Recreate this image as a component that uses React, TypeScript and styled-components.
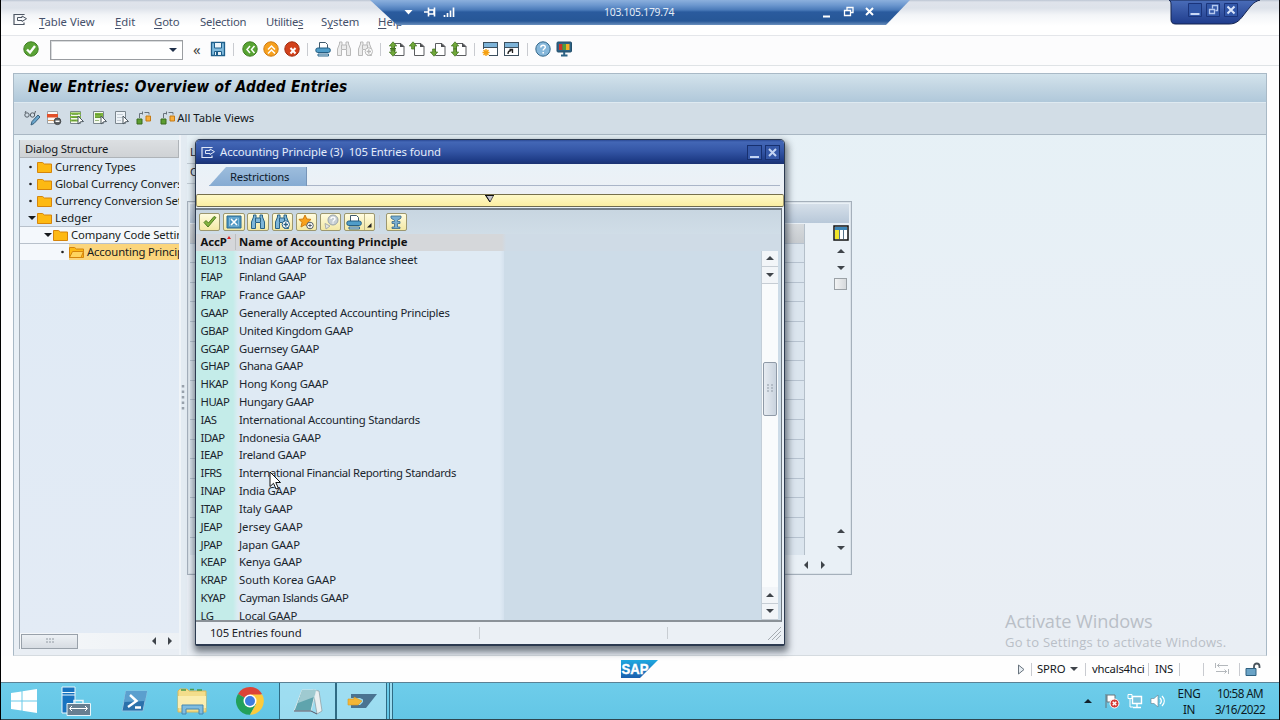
import React from 'react';
import styled, { createGlobalStyle } from 'styled-components';

const Global = createGlobalStyle`
  * { box-sizing: border-box; }
  body { margin: 0; overflow: hidden; background: #fff; }
`;

const ui = '"Noto Sans", "DejaVu Sans Condensed", sans-serif';

const Screen = styled.div`
  position: relative;
  width: 1280px;
  height: 720px;
  display: flex;
  flex-direction: column;
  overflow: hidden;
  background: #fdfdfe;
  border-left: 1px solid #000;
  border-right: 1px solid #0c0c10;
  font-family: ${ui};
  font-size: 11.3px;
  line-height: 16px;
  color: #1c2227;
  white-space: pre;
`;

/* ---------- menu and system toolbar ---------- */
const MenuBar = styled.div`
  height: 36px;
  flex: none;
  display: flex;
  align-items: flex-start;
  padding: 14px 0 0 12px;
  border-bottom: 1px solid #e4e6ea;
  background: linear-gradient(#bcc5d3 0, #dfe3eb 2px, #dde2ea 8px, #f3f5f8 15px, #fff 26px);
`;
const MenuItem = styled.span<{ $w: number; $ls?: number }>`
  width: ${p => p.$w}px;
  flex: none;
  color: #45506a;
  letter-spacing: ${p => p.$ls ?? 0}px;
  u { text-underline-offset: 2px; text-decoration-thickness: 1px; }
`;
const MenuIcon = styled.span`
  width: 26px;
  flex: none;
  height: 14px;
  margin-top: -1px;
  svg { display: block; }
`;
const SysBar = styled.div`
  height: 30px;
  flex: none;
  display: flex;
  align-items: center;
  padding: 0 0 3px 22px;
  border-bottom: 1px solid #dfe3e6;
  background: #fcfcfd;
`;
const Command = styled.div`
  width: 133px;
  height: 20px;
  flex: none;
  margin: 2px 0 0 11px;
  border: 1px solid #9a9da1;
  box-shadow: inset 1px 1px 0 #d9dbdd;
  background: #fff;
  display: flex;
  align-items: center;
  justify-content: flex-end;
  padding-right: 5px;
`;
const Back2 = styled.span`
  width: 17px;
  flex: none;
  margin-left: 10px;
  font-size: 15px;
  color: #444;
`;
const Slot = styled.span<{ $gap?: number }>`
  width: 16px;
  height: 16px;
  flex: none;
  margin-left: ${p => p.$gap ?? 4.9}px;
  svg { display: block; }
`;
const Sep = styled.i<{ $l?: number }>`
  width: 1px;
  height: 13px;
  flex: none;
  background: #c9cbd0;
  margin-left: ${p => p.$l ?? 7}px;
`;

/* ---------- workspace ---------- */
const Work = styled.div`
  height: 583px;
  flex: none;
  margin: 7px 12px 0 12px;
  border: 1px solid #a9b9c6;
  border-bottom-color: #d5dbe0;
  display: flex;
  flex-direction: column;
  background: linear-gradient(#e6f1f6, #e9eff6 60%, #e9eef4);
`;
const TitleBand = styled.div`
  height: 28px;
  flex: none;
  padding: 3px 0 0 14px;
  background: linear-gradient(#d3e3ec, #c3d6e3 45%, #b0c8da);
  font: italic bold 15.3px/20px "DejaVu Sans Condensed", "DejaVu Sans", sans-serif;
  letter-spacing: 0.26px;
  color: #000;
`;
const AppBar = styled.div`
  height: 33px;
  flex: none;
  display: flex;
  align-items: center;
  padding: 0 0 2px 5px;
  background: #d2dde6;
  border-bottom: 1px solid #a9b7c3;
  border-top: 1px solid #dfeaf1;
  color: #14181c;
`;
const Body = styled.div`
  flex: 1;
  display: flex;
  min-height: 0;
`;
const TreePane = styled.div`
  width: 160px;
  flex: none;
  margin: 5px 0 0 5px;
  border-left: 1px solid #a3adb7;
  height: 509px;
  display: flex;
  flex-direction: column;
  overflow: hidden;
  background: linear-gradient(#dfeaf5, #e3ebf5);
`;
const TreeHead = styled.div`
  height: 18px;
  padding: 1px 0 0 5px;
  flex: none;
  border: solid #aeb3b8;
  border-width: 0 1px 1px 0;
  background: linear-gradient(#dcdfe2, #cfd2d5);
  color: #14181c;
  letter-spacing: -0.2px;
`;
const TreeRow = styled.div<{ $in: number; $lit?: boolean }>`
  height: 17px;
  flex: none;
  display: flex;
  align-items: center;
  padding-left: ${p => p.$in}px;
  border-top: 1px solid ${p => (p.$lit ? '#b8c1cb' : 'transparent')};
  background: ${p => (p.$lit ? '#f4f8fc' : 'transparent')};
  color: #181c20;
`;
const Mark = styled.span`
  width: 9px;
  flex: none;
  display: flex;
  align-items: center;
  height: 12px;
`;
const TreeLabel = styled.span<{ $sel?: boolean; $ls?: number }>`
  display: flex;
  gap: 3px;
  align-items: center;
  flex: 1 0 auto;
  height: 16px;
  letter-spacing: ${p => p.$ls ?? 0}px;
  background: ${p => (p.$sel ? '#fbd57c' : 'transparent')};
`;
const Filler = styled.div`flex: 1;`;
const TreeScroll = styled.div`
  height: 16px;
  flex: none;
  display: flex;
  align-items: center;
  gap: 8px;
  padding-right: 5px;
  background: linear-gradient(90deg, #f6f8fa, #edf1f5);
`;
const HThumb = styled.div`
  width: 57px;
  height: 15px;
  margin-right: auto;
  margin-left: 1px;
  border: 1px solid #99a1aa;
  background: linear-gradient(#edf1f5, #d7dce2);
  display: grid;
  place-items: center;
`;
const Splitter = styled.div`
  width: 8px;
  flex: none;
  display: grid;
  place-items: center;
  background: linear-gradient(90deg, #f0f4f8 2px, #e3ebf2 2px);
  padding: 5px 1px 0 0;
`;
const Detail = styled.div`
  width: 665px;
  flex: none;
  margin-top: 9px;
  display: flex;
  flex-direction: column;
`;
const Field = styled.div`
  height: 20px;
  padding-left: 3px;
  border-bottom: 1px solid #c2ccd4;
  width: 50px;
`;
const TableBox = styled.div`
  margin-top: 17px;
  height: 374px;
  border: 1px solid #a5b0bb;
  box-shadow: inset 0 0 0 1px #dbe3ea;
  display: flex;
  flex-direction: column;
  background: #e9f0f6;
  padding: 2px;
`;
const TableTitle = styled.div`
  height: 19px;
  flex: none;
  background: linear-gradient(#d5dfe9, #b8c8d9);
`;
const TableMain = styled.div`
  flex: 1;
  display: flex;
  justify-content: space-between;
`;
const Grid = styled.div`
  width: 615px;
  height: 331px;
  margin-top: 1px;
  border-right: 1px solid #b4bfc9;
  background: repeating-linear-gradient(#dbe5ee 0 18.6px, #b6c2cf 18.6px 19.6px);
`;
const GridHead = styled.div`
  height: 19px;
  background: linear-gradient(#d6dadd, #c7cbcf);
`;
const VBar = styled.div`
  width: 17px;
  display: flex;
  flex-direction: column;
  align-items: center;
  padding: 2px 0 3px;
  gap: 9px;
  svg { display: block; flex: none; }
  svg:first-child { margin-bottom: -3px; }
`;
const VThumb = styled.div`
  width: 13px;
  height: 12px;
  border: 1px solid #9ba1a6;
  background: linear-gradient(90deg, #f2f3f4, #d6d9dc);
  margin-top: -3px;
`;
const TableFoot = styled.div`
  height: 20px;
  flex: none;
  display: flex;
  align-items: center;
  gap: 9px;
  padding-left: 612px;
`;

/* ---------- dialog ---------- */
const Dialog = styled.div`
  position: absolute;
  left: 194px;
  top: 139px;
  width: 590px;
  height: 507px;
  border: solid #2c3a50;
  border-width: 1px 1px 2px;
  border-radius: 5px 5px 2px 2px;
  background: #e9f0f6;
  box-shadow: 1px 4px 7px 2px rgba(40, 50, 62, 0.62);
  display: flex;
  flex-direction: column;
  overflow: hidden;
`;
const DlgTitle = styled.div`
  height: 24px;
  flex: none;
  display: flex;
  align-items: center;
  padding: 0 4px 0 5px;
  color: #e4ecfa;
  background: linear-gradient(#2c4a96 0, #4367b6 2px, #3456a6 11px, #1f3d88 20px, #1a3271);
  span { margin: 0 auto 0 4px; letter-spacing: -0.08px; }
`;
const DlgBtn = styled.i`
  width: 15px;
  height: 15px;
  margin-left: 3px;
  border: 1px solid #17306f;
  background: #3558a8;
  svg { display: block; }
`;
const Tabs = styled.div`
  height: 30px;
  flex: none;
  padding: 3px 4px 0 13px;
  background: linear-gradient(#e9f2f8, #edf0f5);
`;
const TabLine = styled.div`
  height: 19px;
  border-bottom: 1px solid #aab5c8;
`;
const Tab = styled.div`
  width: 98px;
  height: 19px;
  padding: 2px 0 0 21px;
  color: #101c2c;
  letter-spacing: -0.25px;
  background: linear-gradient(#9dbddd, #86abd2);
  border-right: 1px solid #7795b8;
  clip-path: polygon(17px 0, 100% 0, 100% 100%, 0 100%);
`;
const Fold = styled.div`
  height: 13px;
  flex: none;
  border: 1px solid #a39a70;
  border-top-color: #77704c;
  border-bottom-color: #6e6a50;
  border-radius: 2px;
  background: linear-gradient(#fff9c8, #fbeea2);
  display: flex;
  justify-content: center;
  svg { margin: -1px 2px 0 0; }
`;
const ListBox = styled.div`
  height: 414px;
  flex: none;
  margin: 1px 2px 0 0;
  border-top: 2px solid #747e88;
  border-right: 1px solid #6d7780;
  border-bottom: 2px solid #8b9298;
  background: #cddce8;
  display: flex;
  flex-direction: column;
  overflow: hidden;
`;
const DlgTools = styled.div`
  height: 23.5px;
  flex: none;
  display: flex;
  align-items: center;
  gap: 2.8px;
  padding: 0 0 0 3px;
  background: linear-gradient(#c8d6e1, #d0dde7);
`;
const YBtn = styled.div<{ $w?: number; $ml?: number }>`
  width: ${p => p.$w ?? 21.4}px;
  height: 18px;
  flex: none;
  margin-left: ${p => p.$ml ?? 0}px;
  border: 1px solid #9c976f;
  border-radius: 2px;
  background: linear-gradient(#fffce0, #f3e8a4);
  display: flex;
  align-items: center;
  justify-content: center;
  svg { display: block; flex: none; }
`;
const Split = styled.i`
  width: 1px;
  height: 100%;
  margin: 0 1px 0 2px;
  background: #bdb68a;
`;
const Heads = styled.div`
  height: 17px;
  flex: none;
  display: flex;
  align-items: center;
  background: linear-gradient(90deg, #d5d7da 306px, #cfdbe6 310px);
  font-weight: bold;
  color: #111;
`;
const Scroller = styled.div`
  flex: 1;
  min-height: 0;
  display: flex;
`;
const Rows = styled.div`
  width: 308px;
  height: 370px;
  overflow: hidden;
  background: linear-gradient(90deg, #c4ece9 37px, #d8ecf1 41px, #dfeaf4 43px, #dfeaf4 304px, #d5e2ee);
`;
const Row = styled.div`
  height: 17.82px;
  line-height: 17.82px;
  display: flex;
  color: #1a252d;
`;
const Code = styled.span<{ $ls?: number }>`
  width: 39px;
  padding-left: 4.5px;
  flex: none;
  letter-spacing: ${p => p.$ls ?? -0.45}px;
`;
const Name = styled.span<{ $ls?: number }>`
  padding-left: 4px;
  letter-spacing: ${p => p.$ls ?? 0}px;
`;
const HeadName = styled(Name)`
  border-left: 1px solid #bdbfc1;
  padding-left: 3px;
`;
const SortMark = styled.sup`
  display: inline-block;
  width: 0;
  height: 0;
  border: 2px solid transparent;
  border-bottom: 3px solid #d22;
  border-top: 0;
  line-height: 0;
  margin-bottom: 2px;
`;
const DlgScroll = styled.div`
  width: 17px;
  margin-left: auto;
  margin-right: 3px;
  background: #f9fbfc;
  border-left: 1px solid #c3ced8;
  display: flex;
  flex-direction: column;
`;
const ScrollBtn = styled.div`
  height: 16.5px;
  flex: none;
  display: grid;
  place-items: center;
  background: #f2f5f8;
  border-bottom: 1px solid #c6cdd4;
`;
const DlgThumb = styled.div`
  height: 54px;
  margin: 78px 1px auto 1px;
  border: 1px solid #8f9aa7;
  border-radius: 2px;
  background: linear-gradient(90deg, #e6ebf1, #c9d3de);
  display: grid;
  place-items: center;
`;
const DlgStatus = styled.div`
  flex: 1;
  display: flex;
  align-items: center;
  padding-left: 14px;
  background: #ebf0f5;
  span { width: 269px; letter-spacing: -0.12px; }
  i { width: 188px; height: 12px; border-left: 1px solid #c8cdd2; }
  i:last-of-type { width: 100px; }
`;

/* ---------- window chrome floating over the page ---------- */
const RemoteBar = styled.div`
  position: absolute;
  left: 369px;
  top: 0;
  width: 540px;
  height: 25px;
  clip-path: polygon(0 0, 100% 0, 516px 100%, 27px 100%);
  background: linear-gradient(#8cb0dd 0, #6d98cf 5px, #4a7ab9 10px, #2a5b9e 12px, #275797 21px, #6a8fbd 25px);
  color: #e4ecf6;
  font-size: 10.4px;
`;
const RemoteRow = styled.div`
  height: 23px;
  display: flex;
  align-items: center;
  padding-left: 34px;
  svg { display: block; flex: none; }
`;
const Address = styled.span`
  width: 71px;
  flex: none;
  margin-left: 145px;
  letter-spacing: -0.25px;
`;
const CornerTab = styled.div`
  position: absolute;
  left: 1168px;
  top: 0;
  width: 92px;
  height: 26px;
`;
const Watermark = styled.div`
  position: absolute;
  left: 1004px;
  top: 609px;
  color: #b9bfc7;
  font-family: "Open Sans", "Noto Sans", sans-serif;
  font-size: 13px;
  line-height: 18px;
  letter-spacing: 0.24px;
  b { display: block; font-weight: 400; font-size: 18.2px; line-height: 24px; letter-spacing: -0.1px; }
`;
const Cursor = styled.div`
  position: absolute;
  left: 268px;
  top: 471px;
`;

/* ---------- status bar and taskbar ---------- */
const StatusBar = styled.div`
  height: 26px;
  flex: none;
  display: flex;
  align-items: center;
  padding-left: 620px;
  color: #14181c;
  background: #fefefe;
  svg { display: block; flex: none; }
`;
const StatusCell = styled.span<{ $ml: number; $w?: number; $ls?: number }>`
  margin-left: ${p => p.$ml}px;
  width: ${p => (p.$w ? p.$w + 'px' : 'auto')};
  letter-spacing: ${p => p.$ls ?? -0.2}px;
  flex: none;
`;
const Taskbar = styled.div`
  flex: 1;
  border-top: 1px solid #5b8194;
  border-bottom: 1px solid #2e4650;
  background: linear-gradient(#6ecdea, #63c6e6);
  display: flex;
  align-items: center;
  color: #0c1a24;
  svg { display: block; flex: none; }
`;
const TaskItem = styled.span<{ $w: number; $open?: boolean }>`
  width: ${p => p.$w}px;
  height: 100%;
  flex: none;
  display: grid;
  place-items: center;
  background: ${p => (p.$open ? 'rgba(200,236,248,.55)' : 'transparent')};
  border: ${p => (p.$open ? '1px solid #2f6b84' : '0')};
  border-top: 0;
  border-bottom: 0;
`;
const Stack = styled.i`
  width: 4px;
  margin-left: 2px;
  height: 100%;
  border: solid #2f6b84;
  border-width: 0 1px;
  background: #9bdcf0;
`;
const Tray = styled.div`
  margin-left: auto;
  padding-right: 8px;
  display: flex;
  align-items: center;
  gap: 7px;
`;
const TrayText = styled.div<{ $w: number; $ml?: number; $ls?: number }>`
  width: ${p => p.$w}px;
  margin-left: ${p => p.$ml ?? 0}px;
  text-align: center;
  font-size: 11.7px;
  letter-spacing: ${p => p.$ls ?? 0}px;
`;

/* ---------- drawings ---------- */
const Svg = ({ w = 16, h = 16, children }: { w?: number; h?: number; children: React.ReactNode }) => (
  <svg width={w} height={h} viewBox={`0 0 ${w} ${h}`} fill="none">{children}</svg>
);
const Arrow = ({ dir, c = '#3f444a' }: { dir: 'u' | 'd' | 'l' | 'r'; c?: string }) => {
  const d = { u: 'M0 6L4 2 8 6z', d: 'M0 2L4 6 8 2z', l: 'M6 0L2 4 6 8z', r: 'M2 0L6 4 2 8z' }[dir];
  return <Svg w={8} h={8}><path d={d} fill={c} /></Svg>;
};
const Exit = ({ c }: { c: string }) => (
  <Svg w={15} h={13}>
    <path d="M11 2V1.500H1v10h10V9.500" stroke={c} strokeWidth="1.200" />
    <path d="M4.500 4.500h4.500V3l4.500 2.700L9 8.500V7.500H4.500z" stroke={c} />
  </Svg>
);
const Folder = ({ open }: { open?: boolean }) => (
  <Svg w={15} h={13}>
    <path d="M.5 11.500V1.500h5l2 1.500h7v8.500z" fill="#fdb913" stroke="#d5850c" />
    {open && <path d="M.5 11.500l3-6h11l-2.500 6z" fill="#ffd45e" stroke="#d5850c" />}
  </Svg>
);
const Binoc = ({ c, f, plus }: { c: string; f: string; plus?: boolean }) => (
  <Svg>
    <path d="M1.500 14.500V8l2-5V1h2.500v3h4V1h2.500v2l2 5v6.500h-4V8.500h-5v6z" fill={f} stroke={c} />
    <path d="M5.500 4v4M10.500 4v4" stroke={c} />
    {plus && <><circle cx="11.800" cy="10.500" r="3.700" fill="#fff" stroke={c} /><path d="M11.800 8.300v4.400M9.600 10.500h4.400" stroke={c} strokeWidth="1.300" /></>}
  </Svg>
);
const Printer = () => (
  <Svg>
    <path d="M4.500 7.500v-6h6l2 2v4" fill="#fff" stroke="#405a6c" />
    <rect x=".8" y="7" width="14.500" height="4.500" rx="2" fill="#4f9dc9" stroke="#255e83" />
    <path d="M3 13h10.500v2H3z" fill="#cfe3ef" stroke="#2e6a90" />
  </Svg>
);
const Page = ({ up, down, two }: { up?: boolean; down?: boolean; two?: boolean }) => (
  <Svg>
    <path d="M5.500 14.500v-12h6.500l3 3v9z" fill="#fff" stroke="#5b5d60" />
    <path d="M11 2v4h4.500z" fill="#4d4f52" />
    {up && <path d="M4 .8L7.700 5H5.400v3H2.600V5H.300z" fill="#71a83a" stroke="#42731f" strokeWidth=".7" />}
    {down && <path d="M4 15.200L.300 11h2.300V8h2.800v3h2.300z" fill="#71a83a" stroke="#42731f" strokeWidth=".7" />}
    {two && <path d="M1 7.500h6M1 9h6" stroke="#42731f" />}
  </Svg>
);
const Win = ({ star }: { star?: boolean }) => (
  <Svg>
    <rect x="1.500" y="1.500" width="14" height="13" fill="#fff" stroke="#3c4f5e" />
    <rect x="2" y="2" width="13" height="4" fill="#7db3d8" />
    <path d="M1.500 6.500h14" stroke="#3c4f5e" />
    {star
      ? <><path d="M0 8h7v8H0z" fill="#fcfcfd" /><path d="M4 8v7M.5 11.500h7M1.500 9l5 5M6.500 9l-5 5" stroke="#f5a010" strokeWidth="1.400" /></>
      : <path d="M5 13c0-2 1-3.500 3.500-3.500M6.500 8.500h3v3.500" stroke="#222" strokeWidth="1.300" />}
  </Svg>
);
const Disc = ({ f, s, children }: { f: string; s: string; children: React.ReactNode }) => (
  <Svg><circle cx="8" cy="8" r="7.200" fill={f} stroke={s} />{children}</Svg>
);
const Save = () => (
  <Svg>
    <path d="M1.500 1.500h13v13h-13z" fill="#7fbadd" stroke="#1f5f8b" strokeWidth="1.300" />
    <path d="M4.500 1.500h7V7h-7z" fill="#eef6fb" stroke="#1f5f8b" />
    <path d="M4.500 14.500v-4h7v4z" fill="#e6f1f8" stroke="#1f5f8b" />
    <path d="M6 11v3h2v-3z" fill="#1f5f8b" />
  </Svg>
);
const Sheet = ({ kind }: { kind: 'all' | 'block' | 'none' }) => (
  <Svg>
    <path d="M1.500 1.500h10v12h-10z" fill={kind === 'none' ? '#eef3f7' : '#f4f9ee'} stroke="#7b868e" />
    {kind === 'all' && <path d="M1 3.500h11M1 7h11M1 10.500h11" stroke="#7cb53c" strokeWidth="2" />}
    {kind === 'block' && <path d="M3 3h8v5H3z" fill="#7cb53c" />}
    <path d="M3 4.500h6M3 7.500h6M3 10.500h4" stroke={kind === 'none' ? '#a7b3bd' : '#5d8a35'} strokeWidth=".6" />
    <path d="M9 6l5.500 5.500-2.800.3L9 14z" fill="#fff" stroke="#4d5860" />
  </Svg>
);
const Variant = () => (
  <Svg>
    <path d="M1 9h5v5H1z" fill="#5d9e31" stroke="#3a6b1d" />
    <path d="M10 6h4.500v5H10z" fill="#f9ae3c" stroke="#c47a15" />
    <path d="M3.500 8V3.500h3M8.500 2.500h4.500v2M6.500 1.500v3" stroke="#68737c" />
  </Svg>
);

const tree = [
  { t: 'Currency Types', i: 8, ls: -0.05 },
  { t: 'Global Currency Conversion', i: 8, ls: -0.15 },
  { t: 'Currency Conversion Settings', i: 8, ls: -0.15 },
  { t: 'Ledger', i: 8, open: true, ls: 0 },
  { t: 'Company Code Settings', i: 24, open: true, lit: true, ls: -0.12 },
  { t: 'Accounting Principles', i: 40, lit: true, sel: true, ls: -0.15 },
];
const entries: [string, string, number][] = [
  ['EU13', 'Indian GAAP for Tax Balance sheet', -0.11],
  ['FIAP', 'Finland GAAP', -0.34],
  ['FRAP', 'France GAAP', -0.12],
  ['GAAP', 'Generally Accepted Accounting Principles', -0.21],
  ['GBAP', 'United Kingdom GAAP', -0.27],
  ['GGAP', 'Guernsey GAAP', -0.22],
  ['GHAP', 'Ghana GAAP', -0.34],
  ['HKAP', 'Hong Kong GAAP', -0.2],
  ['HUAP', 'Hungary GAAP', -0.3],
  ['IAS', 'International Accounting Standards', -0.23],
  ['IDAP', 'Indonesia GAAP', -0.23],
  ['IEAP', 'Ireland GAAP', -0.27],
  ['IFRS', 'International Financial Reporting Standards', -0.33],
  ['INAP', 'India GAAP', -0.23],
  ['ITAP', 'Italy GAAP', -0.16],
  ['JEAP', 'Jersey GAAP', 0],
  ['JPAP', 'Japan GAAP', -0.12],
  ['KEAP', 'Kenya GAAP', -0.2],
  ['KRAP', 'South Korea GAAP', -0.03],
  ['KYAP', 'Cayman Islands GAAP', -0.36],
  ['LG', 'Local GAAP', -0.18],
];

function SystemToolbar() {
  return (
    <SysBar>
      <Slot $gap={0}><Disc f="#5aa336" s="#3f7d22"><path d="M4 8.500l3 3L12 5" stroke="#fff" strokeWidth="2.400" /></Disc></Slot>
      <Command><Arrow dir="d" c="#20304a" /></Command>
      <Back2>«</Back2>
      <Slot $gap={0}><Save /></Slot>
      <Sep />
      <Slot $gap={8}><Disc f="#57a332" s="#3f7d22"><path d="M8 5L5 8.500 8 12M12.500 5l-3 3.500 3 3.500" stroke="#fff" strokeWidth="1.500" /></Disc></Slot>
      <Slot><Disc f="#f6a01e" s="#cf7a10"><path d="M5 8.500L8.500 5 12 8.500M5 12.500L8.500 9l3.500 3.500" stroke="#fff" strokeWidth="1.500" /></Disc></Slot>
      <Slot><Disc f="#d2411b" s="#a02c0e"><path d="M6.500 7l5 5.500M11.500 7l-5 5.500" stroke="#fff" strokeWidth="2" /></Disc></Slot>
      <Sep />
      <Slot $gap={7.5}><Printer /></Slot>
      <Slot><Binoc c="#b9b9b9" f="#ececec" /></Slot>
      <Slot><Binoc c="#b9b9b9" f="#ececec" plus /></Slot>
      <Sep />
      <Slot $gap={7.5}><Page up down two /></Slot>
      <Slot><Page up /></Slot>
      <Slot><Page down /></Slot>
      <Slot><Page up down /></Slot>
      <Sep />
      <Slot $gap={7}><Win star /></Slot>
      <Slot><Win /></Slot>
      <Sep $l={8} />
      <Slot $gap={7.2}><Disc f="#86b7da" s="#33688c"><path d="M5.800 6.500c0-3 4.500-3 4.500-.3 0 1.600-2.100 1.500-2.100 3.300M8.200 11v1.600" stroke="#fff" strokeWidth="1.500" /></Disc></Slot>
      <Slot>
        <Svg>
          <rect x="1" y="1" width="14.500" height="10" rx="1" fill="#2c6386" stroke="#244f6b" />
          <path d="M3 3h3.500v6H3z" fill="#cf3328" /><path d="M6.500 3H10v6H6.500z" fill="#4f9c3c" /><path d="M10 3h3.500v6H10z" fill="#f2ae27" />
          <path d="M8.200 11v3M5 14.500h6.500" stroke="#2c6386" strokeWidth="2" />
        </Svg>
      </Slot>
    </SysBar>
  );
}

function ValueDialog() {
  return (
    <Dialog>
      <DlgTitle>
        <Exit c="#dfe8f8" />
        <span>Accounting Principle (3)  105 Entries found</span>
        <DlgBtn><Svg w={13} h={13}><path d="M2 11h9" stroke="#c3d4f3" strokeWidth="2" /></Svg></DlgBtn>
        <DlgBtn><Svg w={13} h={13}><path d="M3 3l7 7M10 3l-7 7" stroke="#c3d4f3" strokeWidth="2" /></Svg></DlgBtn>
      </DlgTitle>
      <Tabs><TabLine><Tab>Restrictions</Tab></TabLine></Tabs>
      <Fold><Svg w={11} h={9}><path d="M2 1.500h7.500L6 8z" fill="#c4c4cc" stroke="#55555a" /><path d="M1 1.500h9M2 2l4 6" stroke="#111" /></Svg></Fold>
      <ListBox>
        <DlgTools>
          <YBtn><Svg><path d="M2 8.500l4 4.500 8-9.500-2-1L6.500 9 4 6.500z" fill="#82b33f" stroke="#517c22" /></Svg></YBtn>
          <YBtn><Svg><path d="M1 2h14v12H1z" fill="#4a94c0" stroke="#2b6b93" /><path d="M3.500 4h9v8h-9z" stroke="#9ccbe6" strokeWidth=".7" /><path d="M5 5l6 6M11 5l-6 6" stroke="#fff" strokeWidth="1.600" /></Svg></YBtn>
          <YBtn><Binoc c="#2a6285" f="#7eb6d9" /></YBtn>
          <YBtn><Binoc c="#2a6285" f="#7eb6d9" plus /></YBtn>
          <YBtn><Svg><path d="M7 1l1.800 4 4.200.4-3.200 3L11 13l-4-2.300L3 13l1-4.600L1 5.400 5.200 5z" fill="#f9a11b" stroke="#d07c10" /><circle cx="12" cy="11.500" r="3.300" fill="#fff" stroke="#4d5a63" /><path d="M12 9.700v3.600M10.200 11.500h3.600" stroke="#4d5a63" /></Svg></YBtn>
          <YBtn><Svg><circle cx="10" cy="6" r="5" fill="#c6ced3" stroke="#9ba5ab" /><path d="M8 5c0-2.500 4-2.500 4 0 0 1.300-2 1.300-2 2.700M10 8.500v1" stroke="#fff" strokeWidth="1.400" /><path d="M2 9.500l5 2.500-4 3z" fill="#e6e7e2" stroke="#a8adab" /></Svg></YBtn>
          <YBtn $w={31}><Printer /><Split /><Svg w={7} h={12}><path d="M5.500 7v4.500H1z" fill="#222" /></Svg></YBtn>
          <Sep $l={1.5} />
          <YBtn $ml={2.5}><Svg><path d="M3 2h10v2c-1 1.500-3.500 1.500-3.500 2.500V7.500H12v2H9.500V13H12v1.500H4V13h2.500V9.500H4v-2h2.500v-1C6.500 5.500 4 5.500 3 4z" fill="#79aed0" stroke="#37698a" strokeWidth=".8" /></Svg></YBtn>
        </DlgTools>
        <Heads>
          <Code $ls={-0.1}>AccP<SortMark /></Code>
          <HeadName $ls={0.05}>Name of Accounting Principle</HeadName>
        </Heads>
        <Scroller>
          <Rows>
            {entries.map(([c, n, ls]) => <Row key={c}><Code>{c}</Code><Name $ls={ls}>{n}</Name></Row>)}
          </Rows>
          <DlgScroll>
            <ScrollBtn><Arrow dir="u" /></ScrollBtn>
            <ScrollBtn><Arrow dir="d" /></ScrollBtn>
            <DlgThumb><Svg w={6} h={9}><path d="M0 1h2M4 1h2M0 4h2M4 4h2M0 7h2M4 7h2" stroke="#919ba6" /></Svg></DlgThumb>
            <ScrollBtn><Arrow dir="u" /></ScrollBtn>
            <ScrollBtn><Arrow dir="d" /></ScrollBtn>
          </DlgScroll>
        </Scroller>
      </ListBox>
      <DlgStatus>
        <span>105 Entries found</span><i /><i />
        <Svg w={15} h={15}><path d="M1 14L14 1M5 14l9-9M9 14l5-5" stroke="#a5abb1" /></Svg>
      </DlgStatus>
    </Dialog>
  );
}

export default function App() {
  return (
    <>
      <Global />
      <Screen>
        <MenuBar>
          <MenuIcon><Exit c="#4d5663" /></MenuIcon>
          <MenuItem $w={76}><u>T</u>able View</MenuItem>
          <MenuItem $w={39}><u>E</u>dit</MenuItem>
          <MenuItem $w={46} $ls={-0.1}><u>G</u>oto</MenuItem>
          <MenuItem $w={66} $ls={-0.2}>Se<u>l</u>ection</MenuItem>
          <MenuItem $w={55} $ls={-0.3}>Utilitie<u>s</u></MenuItem>
          <MenuItem $w={57}>S<u>y</u>stem</MenuItem>
          <MenuItem $w={40}><u>H</u>elp</MenuItem>
        </MenuBar>
        <SystemToolbar />
        <Work>
          <TitleBand>New Entries: Overview of Added Entries</TitleBand>
          <AppBar>
            <Slot><Svg><circle cx="3" cy="5" r="2.200" stroke="#555e66" /><circle cx="8.500" cy="5" r="2.200" stroke="#555e66" /><path d="M1 3l1-2M10.500 4l1-3" stroke="#555e66" /><path d="M7 15l1-3.500L14 5l2 2-6 6.500z" fill="#6aa6cd" stroke="#39617d" /></Svg></Slot>
            <Slot $gap={6.6}><Svg><path d="M1.500 1.500h10v12h-10z" fill="#fbf7f4" stroke="#9aa3aa" /><path d="M1 4h11v3.500H1z" fill="#e2502a" /><path d="M2 10.500h6" stroke="#c96" /><circle cx="11.500" cy="11.300" r="3.300" fill="#5c6063" stroke="#44484b" /><path d="M9.500 11.300h4" stroke="#fff" strokeWidth="1.500" /></Svg></Slot>
            <Slot $gap={6.6}><Sheet kind="all" /></Slot>
            <Slot $gap={6.6}><Sheet kind="block" /></Slot>
            <Slot $gap={6.6}><Sheet kind="none" /></Slot>
            <Slot $gap={6}><Variant /></Slot>
            <Slot $gap={7.5}><Variant /></Slot>
            <StatusCell $ml={1.500} $ls={0}>All Table Views</StatusCell>
          </AppBar>
          <Body>
            <TreePane>
              <TreeHead>Dialog Structure</TreeHead>
              {tree.map(r => (
                <TreeRow key={r.t} $in={r.i} $lit={r.lit}>
                  <Mark>{r.open ? <Arrow dir="d" c="#15191d" /> : <Svg w={8} h={8}><circle cx="2.500" cy="4" r="1.300" fill="#222" /></Svg>}</Mark>
                  <TreeLabel $sel={r.sel} $ls={r.ls}><Folder open={r.sel} />{r.t}</TreeLabel>
                </TreeRow>
              ))}
              <Filler />
              <TreeScroll>
                <HThumb><Svg w={8} h={6}><path d="M0 1h2M3 1h2M6 1h2M0 4h2M3 4h2M6 4h2" stroke="#929aa2" /></Svg></HThumb>
                <Arrow dir="l" /><Arrow dir="r" />
              </TreeScroll>
            </TreePane>
            <Splitter><Svg w={4} h={28}><path d="M2 1v26" stroke="#98a1ab" strokeWidth="2.500" strokeDasharray="2.500 3" /></Svg></Splitter>
            <Detail>
              <Field>L</Field>
              <Field>C</Field>
              <TableBox>
                <TableTitle />
                <TableMain>
                  <Grid><GridHead /></Grid>
                  <VBar>
                    <Svg w={16} h={16}><rect x="1" y="1" width="14" height="14" fill="#fff" stroke="#111" strokeWidth="1.500" /><path d="M2 2h12v3H2z" fill="#3d86b8" /><path d="M2 5h4v9H2z" fill="#f0e32a" /><path d="M6.500 5v9M10.500 5v9" stroke="#56748a" /></Svg>
                    <Arrow dir="u" />
                    <Arrow dir="d" />
                    <VThumb />
                    <Filler />
                    <Arrow dir="u" />
                    <Arrow dir="d" />
                  </VBar>
                </TableMain>
                <TableFoot><Arrow dir="l" /><Arrow dir="r" /></TableFoot>
              </TableBox>
            </Detail>
          </Body>
        </Work>
        <StatusBar>
          <svg width="37" height="18" viewBox="0 0 37 18">
            <defs><linearGradient id="sap" x1="0" y1="0" x2="0" y2="1"><stop offset="0" stopColor="#1fa8e0" /><stop offset="1" stopColor="#1a5fae" /></linearGradient></defs>
            <path d="M0 0h37L19 18H0z" fill="url(#sap)" />
            <text x="0.500" y="14" fontFamily="Liberation Sans" fontWeight="bold" fontSize="14.500" textLength="27" lengthAdjust="spacingAndGlyphs" letterSpacing="0" fill="#fff" stroke="#fff" strokeWidth=".4">SAP</text>
          </svg>
          <StatusCell $ml={359}><Svg w={8} h={11}><path d="M1.500 1l5.500 4.500L1.500 10z" stroke="#69747e" fill="#e7edf2" /></Svg></StatusCell>
          <Sep $l={6} />
          <StatusCell $ml={5} $w={33} $ls={-0.1}>SPRO</StatusCell>
          <Arrow dir="d" />
          <Sep $l={7} />
          <StatusCell $ml={6} $w={56}>vhcals4hci</StatusCell>
          <Sep $l={0} />
          <StatusCell $ml={6} $w={24}>INS</StatusCell>
          <Sep $l={0} /><Sep $l={23} />
          <StatusCell $ml={10} $w={16}><Svg><path d="M1.500 2v5M3 4.500h11M5.500 2.500l-2 2 2 2M14.500 8v5M2 10.500h11M10.500 8.500l2 2-2 2" stroke="#b4b8bc" /></Svg></StatusCell>
          <Sep $l={9} />
          <StatusCell $ml={4.500}><Svg w={17} h={15}><path d="M1 6.500h10v7H1z" fill="#6aa3c6" stroke="#2f6181" /><path d="M9 6V4.500c0-4 5.500-4 5.500 0V6" stroke="#49545c" strokeWidth="1.800" /></Svg></StatusCell>
        </StatusBar>
        <Taskbar>
          <TaskItem $w={46}><Svg w={26} h={24}><path d="M0 4l10.500-1.600v9.100H0zM11.500 2.200L26 0v11.500H11.500zM0 12.500h10.500v9.100L0 20zM11.500 12.500H26V24l-14.500-2.200z" fill="#fff" /></Svg></TaskItem>
          <TaskItem $w={58}><Svg w={30} h={30}><path d="M1 1h13v26H1z" fill="#1873c0" stroke="#e8f6fb" /><path d="M1 6.500h13M1 9h13" stroke="#e8f6fb" /><path d="M6 17.500h23.500v12H6z" fill="#687f91" stroke="#e8f6fb" /><path d="M13 17v-2.500h9V17" stroke="#e8f6fb" strokeWidth="1.500" /><path d="M9 22.500h17M11 20l-2.500 2.500L11 25M24 20l2.500 2.500L24 25" stroke="#fff" /></Svg></TaskItem>
          <TaskItem $w={58}><Svg w={27} h={23}><path d="M5 1h21l-4 20H1z" fill="#2b71ab" stroke="#8dc0df" /><path d="M5 1h21l-2 10L3 12z" fill="#5b9fce" /><path d="M9 5l6.500 6L7 17M14 17.500h6" stroke="#fff" strokeWidth="2.400" /></Svg></TaskItem>
          <TaskItem $w={58}><Svg w={31} h={28}><path d="M1 4l2-2h7l2 2h17v21H1z" fill="#f3dd8b" stroke="#d9b95b" /><path d="M4 3h5M13 2.500h4M20 3h5" stroke="#4b9b49" strokeWidth="1.500" /><path d="M1 9h28v12H1z" fill="#fbedb0" /><path d="M5 27v-9h21v9h-4v-5H9v5z" fill="#7fbce0" stroke="#4587b2" /></Svg></TaskItem>
          <TaskItem $w={58}>
            <Svg w={28} h={28}>
              <path d="M14 14L2 7A13.800 13.800 0 0 1 26 7z" fill="#dc4437" />
              <path d="M14 14L2 7a13.800 13.800 0 0 0 12 20.800L20 17z" fill="#23a05a" />
              <path d="M14 7.500h12.200A13.800 13.800 0 0 1 14 27.800l6-10.500z" fill="#fccb3c" />
              <circle cx="14" cy="14" r="6.500" fill="#fff" /><circle cx="14" cy="14" r="5" fill="#3f7de0" />
            </Svg>
          </TaskItem>
          <TaskItem $w={57} $open><Svg w={30} h={28}><path d="M20 3l6 1 3 20-5 3z" fill="#eaf0f1" stroke="#8b9a9e" strokeWidth=".7" /><path d="M9 3h14l-5 21H1z" fill="#5fa4ad" stroke="#d4e6e9" /><path d="M9 3h14l-2 7L5 16z" fill="#9fcad0" /><path d="M1 24h17l6 3" stroke="#556" /></Svg></TaskItem>
          <TaskItem $w={51} $open><Svg w={30} h={16}><path d="M4 1h26L19 15H4V12h9l3-3V6.500L13 5H4z" fill="#4a7391" /><path d="M1 6h6V4l8 4-4 4H1z" fill="#f4b636" stroke="#d89822" strokeWidth=".6" /></Svg></TaskItem>
          <Stack />
          <Tray>
            <StatusCell $ml={0} $w={13}><Arrow dir="u" c="#12222c" /></StatusCell>
            <Svg><path d="M2 1v14M3 2h8v7H3z" fill="#fff" stroke="#68747b" /><circle cx="10.500" cy="10.500" r="4.500" fill="#d53a35" stroke="#fff" /><path d="M8.700 8.700l3.600 3.600M12.300 8.700l-3.600 3.600" stroke="#fff" strokeWidth="1.400" /></Svg>
            <Svg><path d="M5.500 3.500h9v7h-9zM10 11v3M6 14.500h8" fill="#7bc3dd" stroke="#fff" strokeWidth="1.400" /><path d="M1 1.500h4v4H1zM3 6v8h3" stroke="#fff" /></Svg>
            <Svg><path d="M1 5.500h3L8 2v12l-4-3.500H1z" fill="#fff" stroke="#5e7e8e" strokeWidth=".6" /><path d="M10 5c1.600 1.800 1.600 4.200 0 6M12 3c3 3 3 7 0 10" stroke="#fff" strokeWidth="1.300" /></Svg>
            <TrayText $w={32} $ls={-0.3}>ENG{'\n'}IN</TrayText>
            <TrayText $w={62} $ml={-3} $ls={-0.6}>10:58 AM{'\n'}3/16/2022</TrayText>
          </Tray>
        </Taskbar>

        <Watermark><b>Activate Windows</b>Go to Settings to activate Windows.</Watermark>
        <ValueDialog />
        <Cursor><Svg w={13} h={20}><path d="M1 1v14.500l3.500-3.200 2.500 5.700 2.300-1-2.500-5.500h4.700z" fill="#fff" stroke="#111" /></Svg></Cursor>
        <RemoteBar>
          <RemoteRow>
            <Svg w={9} h={8}><path d="M.5 2h8L4.500 6.500z" fill="#fff" /></Svg>
            <Slot $gap={9.5}><Svg><path d="M1 8h4M5.500 3.500v9M6 6h5v4H6M11.500 3.500v9" stroke="#fff" strokeWidth="1.600" /></Svg></Slot>
            <Slot $gap={4.5}><Svg><path d="M1.500 13v-2M4.500 13V9M7.500 13V6.500M10.500 13V3.500" stroke="#fff" strokeWidth="1.700" /></Svg></Slot>
            <Address>103.105.179.74</Address>
            <Slot $gap={146}><Svg><path d="M2 12.500h7" stroke="#fff" strokeWidth="2.200" /></Svg></Slot>
            <Slot $gap={5.5}><Svg><path d="M1.500 6.500h6v5h-6zM4 6V3.500h6v5H8" stroke="#fff" strokeWidth="1.300" /></Svg></Slot>
            <Slot $gap={6.5}><Svg><path d="M1 4l7 7M8 4l-7 7" stroke="#fff" strokeWidth="2" /></Svg></Slot>
          </RemoteRow>
        </RemoteBar>
        <CornerTab>
          <svg width="92" height="26" viewBox="0 0 92 26" fill="none">
            <defs><linearGradient id="ct" x1="0" y1="0" x2="0" y2="1"><stop offset="0" stopColor="#4a6db9" /><stop offset="1" stopColor="#1f3c8c" /></linearGradient></defs>
            <path d="M0 0h91c-7 2-9 6-14 12-6 8-9 12-17 12H7c-4 0-5-2-5-5V6c0-3 0-5-2-6z" fill="url(#ct)" stroke="#14244f" />
            <path d="M19.500 3.500h13v13h-13zM37.500 3.500h13v13h-13zM55.500 3.500h13v13h-13z" fill="#3257a8" stroke="#1a347b" />
            <path d="M21.500 14h9" stroke="#c9d8f5" strokeWidth="2" />
            <path d="M40.500 9.500h5v4h-5zM43.500 8.500v-3h5v5h-2" stroke="#b6c9ee" strokeWidth="1.300" />
            <path d="M58.500 6.500l7 7M65.500 6.500l-7 7" stroke="#dbe6fb" strokeWidth="2" />
          </svg>
        </CornerTab>
      </Screen>
    </>
  );
}
